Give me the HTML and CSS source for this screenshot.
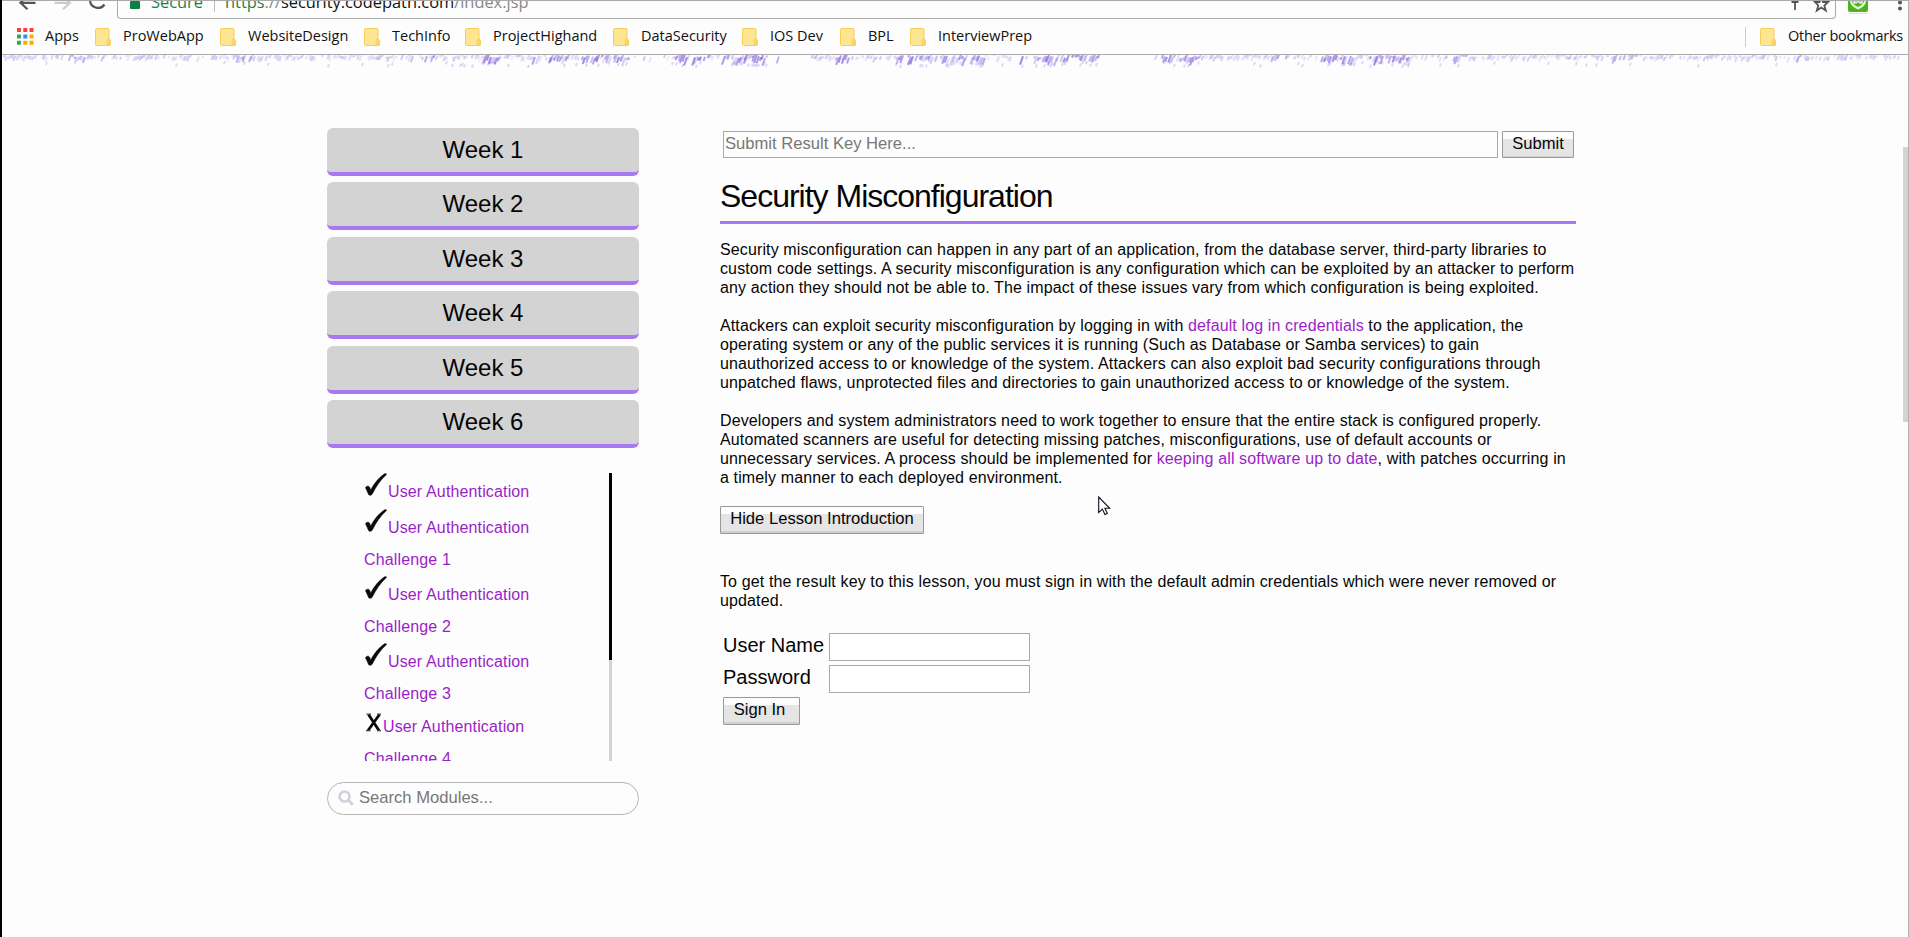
FILE: index.html
```html
<!DOCTYPE html>
<html lang="en">
<head>
<meta charset="utf-8">
<title>Security Misconfiguration</title>
<link rel="stylesheet" href="styles.css">
</head>
<body>
<svg class="defs" width="0" height="0">
  <symbol id="folder" viewBox="0 0 16 18"><path d="M.5 1.5Q.5.5 1.500.5H13q1 0 1 1V11q1.500.5 1.500 2v3.500q0 1-1 1h-13q-1 0-1-1z" fill="#fde592" stroke="#f5cf5c"/><path d="M12 17v-4q.3-2 1.700-2t1.800 2v3q0 1-1 1z" fill="#fbd566" stroke="#f5cf5c" stroke-width=".6"/></symbol>
  <symbol id="check" viewBox="0 0 24 24"><path d="M1.500 14.800C2 12.500 5.500 12.600 6 15l.6 2.200C10 10.500 15 4.500 20.500.8l1.800-.1.2.8C16.500 7 12 13.500 8.200 21.200c-.8 1.300-3 1.500-3.700.2C3.400 19.300 2.700 17 1.500 14.800z" fill="#0a0a0a" stroke="#0a0a0a" stroke-width=".5"/></symbol>
</svg>
<div class="window">
  <header class="toolbar">
    <svg class="nav" width="110" height="19" viewBox="0 0 110 19" fill="none" stroke="#555" stroke-width="2.200">
      <path d="M15 1.800h16M23.500-6l-7.500 7.800 7 6.500"/><path d="M50 1.800h15M58-6l7.500 7.800-7 6.500" stroke="#ccc"/><path d="M85.500-1a8 8 0 0 0 14.500 4.500"/>
    </svg>
    <div class="omnibox">
      <svg width="10" height="9"><rect width="10" height="8" rx="1" fill="#0b8043"/></svg>
      <span class="secure">Secure</span><i class="bar"></i>
      <span class="url"><b>https</b>://<em>security.codepath.com</em>/index.jsp</span>
      <svg class="boxicons" width="48" height="18" viewBox="0 0 48 18" fill="none" stroke="#555" stroke-width="1.800"><path d="M4.500 1h7M8 1v8"/><path d="M28 1h4.500l1.800-4 1.800 4h5l-3.800 3.500 1.500 5-4.500-3-4.500 3 1.500-5z"/></svg>
    </div>
    <svg class="ext" width="60" height="18" viewBox="0 0 60 18"><path d="M0-6h20v15q0 2-2 2H2q-2 0-2-2z" fill="#4db51c"/><path d="M2-6h16v6q0 5-8 8.500-8-3.500-8-8.500z" fill="#e9f7e2"/><path d="M4-6h12v6q0 3-6 6Q4 3 4 0z" fill="#4db51c"/><path d="M6 3V0l2 2 2-2 2 2 2-2v3" fill="none" stroke="#e9f7e2" stroke-width="1.300"/><path d="M1 12.500h18" stroke="#ddd"/><g fill="#555"><circle cx="52" cy="1.500" r="2"/><circle cx="52" cy="7.500" r="2"/></g></svg>
  </header>
  <nav class="bookmarks">
    <svg width="17" height="17" viewBox="0 0 17 17"><path d="M0 0h4v4H0zM6.300 0h4v4h-4zM12.500 0h4v4h-4z" fill="#f44336"/><path d="M0 6.500h4v4H0zM0 12.800h4v4H0z" fill="#34a860"/><path d="M6.300 6.500h4v4h-4z" fill="#2b90f0"/><path d="M12.500 6.500h4v4h-4zM6.300 12.800h4v4h-4zM12.500 12.800h4v4h-4z" fill="#f9ab00"/></svg>
    <a class="apps">Apps</a>
    <span class="bm b1"><svg width="16" height="18"><use href="#folder"/></svg><a>ProWebApp</a></span>
    <span class="bm b2"><svg width="16" height="18"><use href="#folder"/></svg><a>WebsiteDesign</a></span>
    <span class="bm b3"><svg width="16" height="18"><use href="#folder"/></svg><a>TechInfo</a></span>
    <span class="bm b4"><svg width="16" height="18"><use href="#folder"/></svg><a>ProjectHighand</a></span>
    <span class="bm b5"><svg width="16" height="18"><use href="#folder"/></svg><a>DataSecurity</a></span>
    <span class="bm b6"><svg width="16" height="18"><use href="#folder"/></svg><a>IOS Dev</a></span>
    <span class="bm b7"><svg width="16" height="18"><use href="#folder"/></svg><a>BPL</a></span>
    <span class="bm b8"><svg width="16" height="18"><use href="#folder"/></svg><a>InterviewPrep</a></span>
    <span class="bm other"><svg width="16" height="18"><use href="#folder"/></svg><a>Other bookmarks</a></span>
  </nav>
  <svg id="fringe" width="1905" height="15" viewBox="2 55 1905 15"></svg>
  <div class="page">
    <aside class="sidebar">
      <div class="weeks">
        <div class="week">Week 1</div><div class="week">Week 2</div><div class="week">Week 3</div>
        <div class="week">Week 4</div><div class="week">Week 5</div><div class="week">Week 6</div>
      </div>
      <div class="modules">
        <ul>
          <li class="single"><svg width="24" height="24"><use href="#check"/></svg><a>User Authentication</a></li>
          <li><svg width="24" height="24"><use href="#check"/></svg><a>User Authentication<br>Challenge 1</a></li>
          <li><svg width="24" height="24"><use href="#check"/></svg><a>User Authentication<br>Challenge 2</a></li>
          <li><svg width="24" height="24"><use href="#check"/></svg><a>User Authentication<br>Challenge 3</a></li>
          <li class="failed"><svg class="cross" width="19" height="19" viewBox="0 0 19 19"><path d="M4.500 1.500L15 17.500M15.500 1.500L4 17.500" stroke="#0a0a0a" stroke-width="2.800"/><path d="M2.500 1.200h4.500M13 1.200h4M2 17.700h4.500M13 17.700h4" stroke="#444" stroke-width="1.200"/></svg><a>User Authentication<br>Challenge 4</a></li>
        </ul>
        <div class="track"><div class="thumb"></div></div>
      </div>
      <div class="search"><svg width="16" height="16" viewBox="0 0 16 16" fill="none" stroke="#d3d0dc" stroke-width="2.600"><circle cx="6.500" cy="6.500" r="5"/><path d="M10.300 10.300l4.500 4.500" stroke-width="3"/></svg><span>Search Modules...</span></div>
    </aside>
    <main class="lesson">
      <div class="submit"><div class="key">Submit Result Key Here...</div><div class="btn">Submit</div></div>
      <h1>Security Misconfiguration</h1>
      <p>Security misconfiguration can happen in any part of an application, from the database server, third-party libraries to<br>custom code settings. A security misconfiguration is any configuration which can be exploited by an attacker to perform<br>any action they should not be able to. The impact of these issues vary from which configuration is being exploited.</p>
      <p>Attackers can exploit security misconfiguration by logging in with <a>default log in credentials</a> to the application, the<br>operating system or any of the public services it is running (Such as Database or Samba services) to gain<br>unauthorized access to or knowledge of the system. Attackers can also exploit bad security configurations through<br>unpatched flaws, unprotected files and directories to gain unauthorized access to or knowledge of the system.</p>
      <p>Developers and system administrators need to work together to ensure that the entire stack is configured properly.<br>Automated scanners are useful for detecting missing patches, misconfigurations, use of default accounts or<br>unnecessary services. A process should be implemented for <a>keeping all software up to date</a>, with patches occurring in<br>a timely manner to each deployed environment.</p>
      <div class="btn hide">Hide Lesson Introduction</div>
      <p class="task">To get the result key to this lesson, you must sign in with the default admin credentials which were never removed or<br>updated.</p>
      <form class="login">
        <label>User Name</label><div class="field"></div>
        <label>Password</label><div class="field"></div>
        <div class="btn signin">Sign In</div>
      </form>
    </main>
  </div>
</div>
<div class="scrollbar"></div>
<svg class="cursor" width="14" height="20" viewBox="0 0 14 20"><path d="M.7 1v15.500l3.700-3.400 2.500 5.400 2.400-1.100-2.400-5.100h4.800z" fill="#fff" stroke="#112" stroke-width="1.100"/></svg>
<script src="fringe.js"></script>
</body>
</html>
```

FILE: styles.css
```css
* { box-sizing: border-box; }
body { margin: 0; background: #fdfdfd; color: #050505; font-family: "Liberation Sans", Arial, sans-serif; font-size: 16px; overflow: hidden; }
svg { display: block; flex: none; }
.defs { position: absolute; }
.window { height: 937px; border-left: 2px solid #000; border-right: 1px solid #b0b0b0; overflow: hidden; }

.toolbar { height: 19px; display: flex; border-top: 1px solid #aaa; overflow: hidden; font-family: "Open Sans", sans-serif; }
.nav { width: 115px; overflow: hidden; }
.omnibox { width: 1720px; height: 18px; display: flex; align-items: flex-start; padding-left: 12px; border: solid #aaa; border-width: 0 1px 1px; border-radius: 0 0 4px 4px; }
.omnibox span { flex: none; font-size: 16.400px; line-height: 22px; margin-top: -10px; white-space: nowrap; }
.omnibox .secure { width: 74px; padding-left: 11px; color: #17834c; }
.bar { flex: none; width: 1px; height: 11px; margin-right: 10px; background: #bbb; }
.url { color: #888; }
.url b { font-weight: 400; color: #17834c; }
.url em { font-style: normal; color: #111; }
.boxicons { margin-left: auto; }
.ext { margin-left: 12px; }

.bookmarks { height: 36px; display: flex; align-items: center; padding-left: 15px; border-bottom: 1px solid #aaa; font: 14.500px/20px "Open Sans", sans-serif; white-space: nowrap; }
.bookmarks .apps { width: 50px; margin-left: 11px; }
.bm { display: flex; align-items: center; gap: 12px; }
.b1 { width: 125px; }
.b2 { width: 144px; }
.b3 { width: 101px; }
.b4 { width: 148px; }
.b5 { width: 129px; }
.b6 { width: 98px; }
.b7 { width: 70px; }
.other { margin-left: auto; width: 163px; height: 20px; padding-left: 14px; border-left: 1px solid #ccc; letter-spacing: -.28px; }

.page { display: flex; padding: 58px 0 0 325px; }
.sidebar { width: 312px; }
.weeks { display: grid; gap: 6.400px; }
.week { height: 48px; border-bottom: 4px solid #a878f0; border-radius: 6px; background: #d3d3d3; font-size: 24px; line-height: 43px; text-align: center; }
.modules { height: 288px; margin-top: 25px; padding-left: 37px; display: flex; overflow: hidden; }
.modules ul { width: 245px; margin: 0; padding: 0; list-style: none; letter-spacing: .14px; }
.modules li { height: 67px; line-height: 32.500px; }
.modules li.single { height: 36px; }
.modules li.failed { padding-top: 1px; }
.modules li svg { display: inline-block; vertical-align: 0; }
a { color: #9a1fc8; }
.bookmarks a { margin-top: -2px; color: #111; }
.track { width: 3px; background: #d3d3d3; }
.thumb { height: 187px; background: #000; }
.search { height: 33px; margin-top: 21px; padding-left: 10px; display: flex; align-items: center; gap: 5px; border: 1px solid #b5b5b5; border-radius: 17px; color: #777; }
.search span { font-size: 16.600px; line-height: 18px; margin-top: -1px; }

.lesson { width: 856px; margin-left: 81px; }
.submit { display: flex; gap: 4px; padding: 3px 2px 0 3px; font-size: 16.600px; }
.key { flex: 1; height: 27px; padding-left: 1px; border: 1px solid #a9a9a9; color: #777; line-height: 23px; }
.btn { height: 28px; border: 1px solid #999; border-radius: 1px; background: linear-gradient(#fdfdfd 7px, #e5e5e5 7px 24px, #d0d0d0 24px); font-size: 16.600px; line-height: 24px; text-align: center; }
.submit .btn { width: 72px; height: 27px; line-height: 23px; }
h1 { height: 54px; margin: 12px 0 0; border-bottom: 3px solid #a878f0; font-size: 32px; font-weight: 400; line-height: 52px; letter-spacing: -1px; }
p { margin: 16px 0 19px; line-height: 19px; letter-spacing: .123px; white-space: nowrap; }
p + p { margin-top: 19px; }
.hide { width: 204px; }
.task { margin: 38px 0 23px; }
.login { display: grid; grid-template-columns: 106px 201px; gap: 4px 0; margin-left: 3px; font-size: 20px; line-height: 24px; }
.field { height: 28px; border: 1px solid #a9a9a9; background: #fff; }
.signin { width: 77px; padding-right: 4px; }

.scrollbar { position: absolute; left: 1903px; top: 147px; width: 5px; height: 275px; background: #d3d3d3; }
.cursor { position: absolute; left: 1098px; top: 496px; }
```

FILE: fringe.js
```js
// Draws the purple brush fringe under the header: a faint repeating tuft with darker clumps in the middle.
(function () {
  var seed = 7;
  function rnd() { seed = (seed * 16807) % 2147483647; return seed / 2147483647; }
  var dark = [[485, 500], [535, 570], [585, 632], [677, 712], [725, 768], [837, 850], [897, 930], [945, 985], [1020, 1100], [1158, 1200], [1318, 1355], [1370, 1412]];
  var gaps = [[636, 672], [772, 812], [1102, 1156]];
  function within(list, x) { return list.some(function (r) { return x >= r[0] && x <= r[1]; }); }
  var out = '';
  for (var x = 3; x < 1900; x += 2) {
    var strong = within(dark, x), tuft = ((x - 66) % 172 + 172) % 172 < 26;
    if (within(gaps, x) && rnd() > 0.12) continue;
    if (rnd() < (strong ? 0.15 : 0.3)) continue;
    var top = 54 + rnd() * (strong ? 4 : 3), len = 2 + rnd() * (strong ? 7 : tuft ? 6 : 3.5);
    var alpha = (strong ? 0.15 + rnd() * 0.5 : tuft ? 0.12 + rnd() * 0.35 : 0.1 + rnd() * 0.2).toFixed(2);
    out += '<path d="M' + x.toFixed(1) + ' ' + top.toFixed(1) + 'l' + (-len * 0.35).toFixed(1) + ' ' + len.toFixed(1) + '" stroke-opacity="' + alpha + '"/>';
    if (rnd() < (strong ? 0.3 : 0.06)) out += '<path d="M' + x.toFixed(1) + ' ' + (61 + rnd() * 4).toFixed(1) + 'l-1.200 3" stroke-opacity=".2"/>';
  }
  document.getElementById('fringe').innerHTML = '<g stroke="#6a45d8" stroke-width="2" fill="none">' + out + '</g>';
})();
```
